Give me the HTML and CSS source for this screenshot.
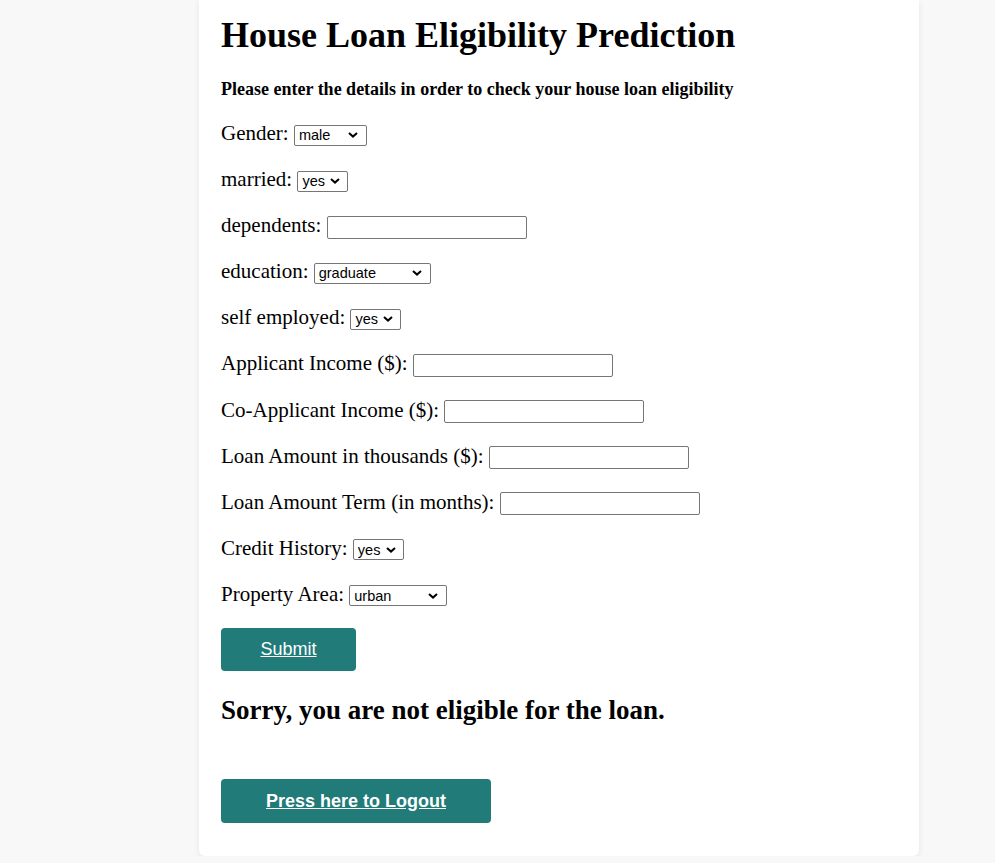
FILE: index.html
```html
<!DOCTYPE html>
<html>
<head>
<meta charset="utf-8">
<title>House Loan Eligibility Prediction</title>
<link rel="stylesheet" href="styles.css">
</head>
<body>
<div class="card">
  <h1 class="title">House Loan Eligibility Prediction</h1>
  <p class="subtitle">Please enter the details in order to check your house loan eligibility</p>
  <form class="form">
    <div class="field">Gender: <select class="sel sel-gender"><option>male</option><option>female</option></select></div>
    <div class="field">married: <select class="sel sel-yn"><option>yes</option><option>no</option></select></div>
    <div class="field">dependents: <input type="text" class="text"></div>
    <div class="field">education: <select class="sel sel-edu"><option>graduate</option><option>not graduate</option></select></div>
    <div class="field">self employed: <select class="sel sel-yn"><option>yes</option><option>no</option></select></div>
    <div class="field">Applicant Income ($): <input type="text" class="text"></div>
    <div class="field">Co-Applicant Income ($): <input type="text" class="text"></div>
    <div class="field">Loan Amount in thousands ($): <input type="text" class="text"></div>
    <div class="field">Loan Amount Term (in months): <input type="text" class="text"></div>
    <div class="field">Credit History: <select class="sel sel-yn"><option>yes</option><option>no</option></select></div>
    <div class="field">Property Area: <select class="sel sel-area"><option>urban</option><option>semiurban</option><option>rural</option></select></div>
    <a class="btn submit" href="#">Submit</a>
  </form>
  <h2 class="result">Sorry, you are not eligible for the loan.</h2>
  <a class="btn logout" href="#">Press here to Logout</a>
</div>
</body>
</html>
```
FILE: styles.css
```css
html, body {
  margin: 0;
  padding: 0;
  background: #f8f8f8;
}
body {
  font-family: "Liberation Serif", "Times New Roman", serif;
  color: #000;
}
.card {
  width: 720px;
  box-sizing: border-box;
  margin-left: 199px;
  background: #fff;
  border-radius: 0 0 6px 6px;
  box-shadow: 0 2px 6px rgba(0,0,0,0.08);
  padding: 14px 22px 33px 22px;
}
.title {
  font-size: 36px;
  font-weight: bold;
  margin: 0;
  line-height: 42px;
}
.subtitle {
  font-size: 18px;
  font-weight: bold;
  margin: 22px 0 0 0;
  line-height: 22px;
}
.form {
  margin-top: 20px;
  display: flex;
  flex-direction: column;
  align-items: flex-start;
}
.field {
  font-size: 21px;
  line-height: 26px;
  height: 26px;
  margin-bottom: 20.1px;
  white-space: nowrap;
}
.sel {
  -webkit-appearance: none;
  appearance: none;
  box-sizing: border-box;
  height: 21px;
  padding: 0 0 0 4px;
  border: 1px solid #767676;
  border-radius: 2px;
  font-family: "Liberation Sans", Arial, sans-serif;
  font-size: 14.5px;
  color: #000;
  background-color: #fff;
  background-image: url("data:image/svg+xml;utf8,<svg xmlns='http://www.w3.org/2000/svg' width='10' height='6' viewBox='0 0 10 6'><path d='M1 1 L5 4.6 L9 1' fill='none' stroke='black' stroke-width='2'/></svg>");
  background-repeat: no-repeat;
  background-position: right 8px center;
  vertical-align: baseline;
}
.sel-gender { width: 73px; }
.sel-yn { width: 51px; background-position: right 7px center; }
.sel-edu { width: 117px; }
.sel-area { width: 98px; }
.text {
  width: 200px;
  height: 23px;
  box-sizing: border-box;
  font-size: 14.5px;
  border: 1px solid #767676;
  border-radius: 2px;
}
.btn {
  display: flex;
  align-items: center;
  justify-content: center;
  box-sizing: border-box;
  background: #217b78;
  color: #fff;
  border-radius: 4px;
  font-family: "Liberation Sans", Arial, sans-serif;
  font-size: 18px;
  text-decoration: underline;
}
.submit {
  width: 135px;
  height: 43px;
  margin-top: 1px;
}
.result {
  font-size: 27px;
  font-weight: bold;
  margin: 23px 0 0 0;
  line-height: 32px;
}
.logout {
  width: 270px;
  height: 44px;
  font-weight: bold;
  margin-top: 53px;
}
```
